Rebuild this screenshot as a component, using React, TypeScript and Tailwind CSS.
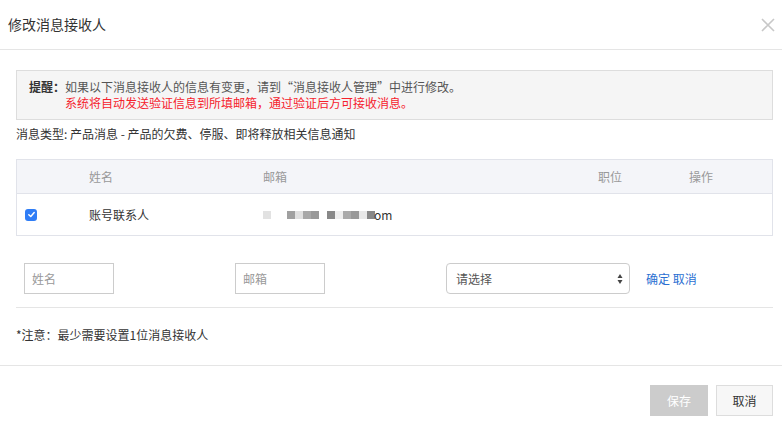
import React from 'react';

const font = { fontFamily: '"Noto Sans CJK SC", "Noto Sans", sans-serif' };

export default function App() {
  return (
    <div className="w-[782px] h-[435px] bg-white text-[#333] overflow-hidden" style={font}>
      {/* Header */}
      <div className="h-[50px] flex items-center justify-between pl-[8px] pr-[4px] border-b border-[#e5e5e5]">
        <span className="text-[14px] text-[#333]">修改消息接收人</span>
        <svg width="16" height="16" viewBox="0 0 16 16" className="mr-[2px]">
          <path d="M2 2 L14 14 M14 2 L2 14" stroke="#c8c8c8" strokeWidth="1.6" />
        </svg>
      </div>

      {/* Body */}
      <div className="pl-4 pr-[9px]">
        <div className="mt-[20px] bg-[#f5f5f5] border border-[#dddddd] py-2 pl-3 text-[12px] leading-4">
          <div className="flex">
            <span className="font-bold text-[#333] w-[36px]">提醒：</span>
            <span className="text-[#555]">如果以下消息接收人的信息有变更，请到“消息接收人管理”中进行修改。</span>
          </div>
          <div className="pl-[36px] text-[#f5222d]">系统将自动发送验证信息到所填邮箱，通过验证后方可接收消息。</div>
        </div>

        <div className="mt-[4px] text-[12px] leading-[20px] text-[#333]">
          消息类型: 产品消息 - 产品的欠费、停服、即将释放相关信息通知
        </div>

        {/* Table */}
        <div className="mt-[15px] border border-[#e1e3ea] text-[12px]">
          <div className="h-[34px] bg-[#f4f5f9] border-b border-[#e1e3ea] flex items-center text-[#999]">
            <div className="w-[72px]" />
            <div className="w-[174px]">姓名</div>
            <div className="w-[335px]">邮箱</div>
            <div className="w-[91px]">职位</div>
            <div>操作</div>
          </div>
          <div className="h-[41px] flex items-center">
            <div className="w-[72px] pl-[8px]">
              <div className="w-[12px] h-[12px] rounded-[3px] bg-[#2f7df6] flex items-center justify-center">
                <svg width="9" height="9" viewBox="0 0 10 10">
                  <path d="M2 5.2 L4.2 7.3 L8 2.8" stroke="white" strokeWidth="1.6" fill="none" strokeLinecap="round" strokeLinejoin="round" />
                </svg>
              </div>
            </div>
            <div className="w-[174px] text-[#333]">账号联系人</div>
            <div className="flex items-center">
              <div className="w-[8px] h-[8px] bg-[#e2e2e2]" />
              <div className="w-[16px]" />
              <div className="w-[8px] h-[8px] bg-[#a0a0a0]" />
              <div className="w-[8px] h-[8px] bg-[#e0e0e0]" />
              <div className="w-[8px] h-[8px] bg-[#a8a8a8]" />
              <div className="w-[8px] h-[8px] bg-[#999999]" />
              <div className="w-[8px]" />
              <div className="w-[8px] h-[8px] bg-[#888888]" />
              <div className="w-[8px] h-[8px] bg-[#eeeeee]" />
              <div className="w-[8px] h-[8px] bg-[#aaaaaa]" />
              <div className="w-[8px] h-[8px] bg-[#999999]" />
              <div className="w-[8px] h-[8px] bg-[#e8e8e8]" />
              <div className="w-[8px] h-[8px] bg-[#888888]" />
              <span className="text-[12px] text-[#333] -ml-[1px]">om</span>
            </div>
          </div>
        </div>

        {/* Add row */}
        <div className="mt-[27px] h-[31px] flex items-center text-[12px]">
          <div className="ml-[8px] w-[90px] h-[31px] border border-[#cccccc] flex items-center pl-[7px] text-[#999]">姓名</div>
          <div className="ml-[121px] w-[90px] h-[31px] border border-[#cccccc] flex items-center pl-[7px] text-[#999]">邮箱</div>
          <div className="ml-[121px] w-[184px] h-[31px] border border-[#cccccc] rounded-[4px] flex items-center justify-between pl-[9px] pr-[6px] text-[#555]">
            <span>请选择</span>
            <svg width="6" height="12" viewBox="0 0 6 12">
              <path d="M3 1 L5.5 5 L0.5 5 Z M3 11 L5.5 7 L0.5 7 Z" fill="#444" />
            </svg>
          </div>
          <div className="ml-[16px] text-[#2a6fd2]">确定 取消</div>
        </div>

        <div className="mt-[13px] border-t border-[#e5e5e5]" />

        <div className="mt-[19px] text-[12px] leading-[16px] text-[#333]">*注意：最少需要设置1位消息接收人</div>
      </div>

      {/* Footer */}
      <div className="mt-[22px] border-t border-[#e5e5e5] pt-[19px] pr-[9px] flex justify-end gap-[8px] text-[12px]">
        <div className="w-[58px] h-[31px] bg-[#cccccc] text-white flex items-center justify-center">保存</div>
        <div className="w-[57px] h-[31px] bg-[#f7f7f7] border border-[#dddddd] text-[#333] flex items-center justify-center">取消</div>
      </div>
    </div>
  );
}
